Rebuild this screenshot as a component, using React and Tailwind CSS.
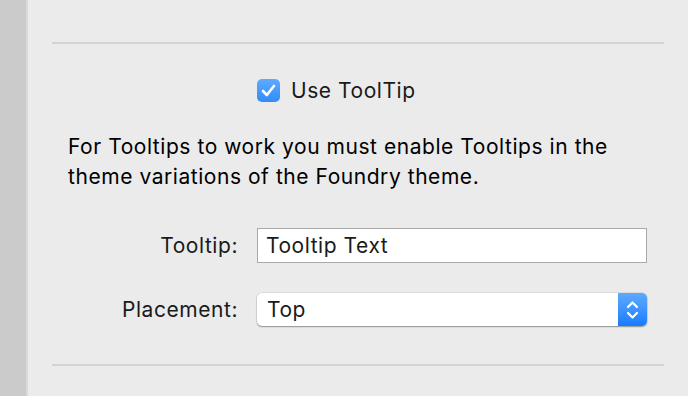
import React from "react";

export default function App() {
  return (
    <div
      className="flex h-[396px] w-[688px] overflow-hidden bg-[#ebebeb] text-[#1a1a1a]"
      style={{ fontFamily: "Inter, 'Liberation Sans', sans-serif" }}
    >
      {/* Left strip */}
      <div className="w-[26px] shrink-0 bg-[#cbcbcb]" />
      <div className="w-[2px] shrink-0 bg-[#d9d9d9]" />

      {/* Main panel */}
      <div className="flex flex-1 flex-col pl-[24px] pr-[24px] text-[21px] tracking-[0.55px]">
        <div className="mt-[42px] h-[2px] bg-[#d3d3d3]" />

        {/* Checkbox */}
        <div className="mt-[35px] flex h-[23px] items-center gap-[11px] pl-[205px]">
          <div className="flex h-[23px] w-[23px] items-center justify-center rounded-[5px] bg-gradient-to-b from-[#5eaaff] to-[#2f8bfb]">
            <svg width="15" height="13" viewBox="0 0 15 13" fill="none">
              <path
                d="M2 7 L5.8 11 L13 2"
                stroke="white"
                strokeWidth="2.6"
                strokeLinecap="round"
                strokeLinejoin="round"
              />
            </svg>
          </div>
          <span className="leading-none">Use ToolTip</span>
        </div>

        {/* Description */}
        <p className="mt-[30px] pl-[16px] leading-[30px] text-black">
          For Tooltips to work you must enable Tooltips in the
          <br />
          theme variations of the Foundry theme.
        </p>

        {/* Tooltip field */}
        <div className="mt-[36px] flex items-center">
          <label className="w-[205px] pr-[19px] text-right">Tooltip:</label>
          <div className="flex h-[35px] w-[390px] items-center border border-[#a8a8a8] bg-white pl-[8px]">
            Tooltip Text
          </div>
        </div>

        {/* Placement select */}
        <div className="mt-[30px] flex items-center">
          <label className="w-[205px] pr-[19px] text-right">Placement:</label>
          <div className="flex h-[33px] w-[390px] overflow-hidden rounded-[5px] bg-white shadow-[0_1px_1.5px_rgba(0,0,0,0.35),0_0_0_0.5px_rgba(0,0,0,0.12)]">
            <div className="flex flex-1 items-center pl-[10px]">Top</div>
            <div className="flex w-[29px] items-center justify-center bg-gradient-to-b from-[#5ea9fd] to-[#157bff]">
              <svg width="13" height="22" viewBox="0 0 13 22" fill="none">
                <path
                  d="M2 8 L6.5 3.5 L11 8 M2 14 L6.5 18.5 L11 14"
                  stroke="white"
                  strokeWidth="2.2"
                  strokeLinecap="round"
                  strokeLinejoin="round"
                />
              </svg>
            </div>
          </div>
        </div>

        <div className="mt-[38px] h-[2px] bg-[#d3d3d3]" />
      </div>
    </div>
  );
}
